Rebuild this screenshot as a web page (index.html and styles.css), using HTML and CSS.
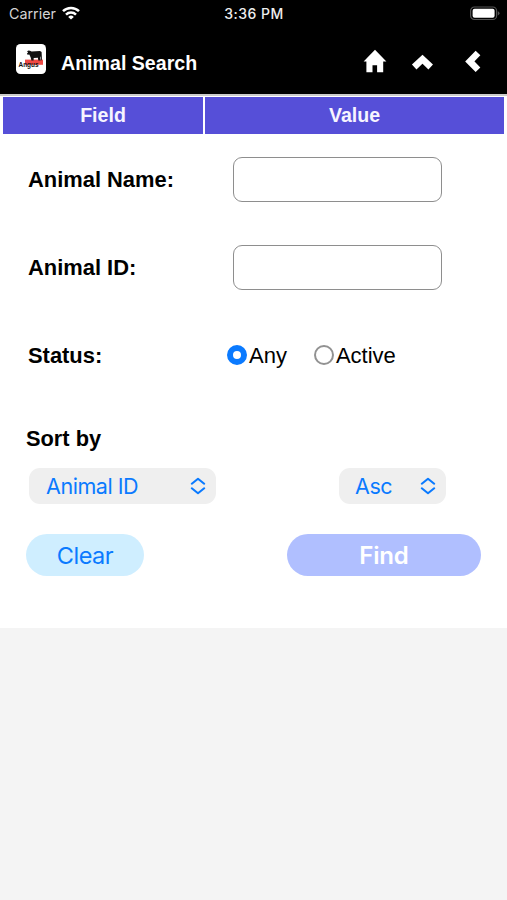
FILE: index.html
```html
<!DOCTYPE html>
<html lang="en">
<head>
<meta charset="utf-8">
<title>Animal Search</title>
<link rel="stylesheet" href="styles.css">
</head>
<body>
<header class="top">
  <div class="statusbar">
    <div class="carrier"><span>Carrier</span>
      <svg class="wifi" width="18" height="14" viewBox="0 0 18 14" fill="none" stroke="#fff" stroke-width="2.5"><path d="M1 5.2a11.4 11.4 0 0 1 16 0M4 8.6a7.1 7.1 0 0 1 10 0"/><path d="M9 13.6 6.2 10.9a4 4 0 0 1 5.6 0z" fill="#fff" stroke="none"/></svg>
    </div>
    <div class="time">3:36 PM</div>
    <svg class="battery" width="31" height="15" viewBox="0 0 31 15"><rect x="1.6" y="1" width="26" height="12.5" rx="3.8" fill="none" stroke="#555" stroke-width="1.2"/><rect x="3.6" y="2.8" width="22" height="9" rx="2" fill="#fff"/><path d="M28.8 5.2q1.7.6 1.7 2.1t-1.7 2.1z" fill="#555"/></svg>
  </div>
  <div class="navbar">
    <svg class="logo" width="30" height="30" viewBox="0 0 30 30"><rect width="30" height="30" rx="4.5" fill="#fff"/><rect x="9" y="15.6" width="18" height="5.2" fill="#ef4a45"/><path d="M11 7.2 12.6 6.4 14 6.7 15.6 7.6l8.4-.6 1.6 1 .4 8.2h-.8l-.4-4-.4 1 .2 3.2h-2.300l-.4-2.600-4.2.3-.1 2.300h-2.200l-.8-3.200-1.300-2.600-1.600.2-.8-1 1.200-1.600z" fill="#111"/><text x="2.5" y="22.600" class="logo-text" textLength="20" lengthAdjust="spacingAndGlyphs">Angus</text></svg>
    <h1>Animal Search</h1>
    <nav>
      <svg width="24" height="24" viewBox="0 0 24 24"><path d="M12 .7.6 12.400h2.800v10.800h6.100v-7h4.600v7h6.100V12.400h3.200z" fill="#fff"/></svg>
      <svg width="22" height="16" viewBox="0 0 22 16" fill="none" stroke="#fff" stroke-width="6.6"><path d="M3.200 13 11.500 5.200l8.200 7.800"/></svg>
      <svg width="16" height="22" viewBox="0 0 16 22" fill="none" stroke="#fff" stroke-width="6.6"><path d="M13 3 4.800 11.400 13 19.700"/></svg>
    </nav>
  </div>
</header>
<main>
  <div class="columns"><div>Field</div><div>Value</div></div>
  <form>
    <div class="row"><label for="name">Animal Name:</label><input class="box" id="name" type="text"></div>
    <div class="row"><label for="aid">Animal ID:</label><input class="box" id="aid" type="text"></div>
    <div class="row"><span class="label">Status:</span>
      <div class="radios">
        <label><input type="radio" name="status" checked><span>Any</span></label>
        <label><input type="radio" name="status"><span>Active</span></label>
      </div>
    </div>
    <h2>Sort by</h2>
    <div class="sorts">
      <button type="button" class="select field"><span>Animal ID</span><svg width="16" height="18" viewBox="0 0 16 18" fill="none" stroke="#0a7aff" stroke-width="2.1" stroke-linecap="round" stroke-linejoin="round"><path d="M1.8 6.7 8 1.8l6.2 4.9M1.8 11.3 8 16.2l6.2-4.9"/></svg></button>
      <button type="button" class="select order"><span>Asc</span><svg width="16" height="18" viewBox="0 0 16 18" fill="none" stroke="#0a7aff" stroke-width="2.1" stroke-linecap="round" stroke-linejoin="round"><path d="M1.8 6.7 8 1.8l6.2 4.9M1.8 11.3 8 16.2l6.2-4.9"/></svg></button>
    </div>
    <div class="actions">
      <button type="reset" class="clear">Clear</button>
      <button type="button" class="find">Find</button>
    </div>
  </form>
</main>
</body>
</html>
```
FILE: styles.css
```css
* { box-sizing: border-box; }
body { margin: 0; min-height: 900px; background: #f4f4f4; color: #000; font-family: "Liberation Sans", Arial, sans-serif; }
button { border: 0; margin: 0; font-family: Inter, sans-serif; }
.top { height: 94px; background: #000; color: #fff; }
.statusbar { height: 28px; padding: 0 7px 0 9px; display: grid; grid-template-columns: 1fr auto 1fr; align-items: center; font-family: Inter, sans-serif; }
.carrier { display: flex; align-items: center; gap: 6px; color: #d4d4d4; font-size: 14.3px; margin-top: -2px; }
.wifi { display: block; margin-top: -1px; }
.time { font-weight: 500; font-size: 14px; letter-spacing: .5px; color: #eee; margin: -2px 0 0 -1px; }
.battery { justify-self: end; margin-top: -1px; }
.navbar { height: 66px; padding: 0 26px 0 16px; display: flex; align-items: center; }
.logo { margin-top: -4px; }
.logo-text { font: bold 7.5px "Liberation Sans", sans-serif; fill: #111; }
h1 { margin: 4px 0 0 15px; font-size: 19.6px; line-height: 24px; }
nav { margin-left: auto; display: flex; align-items: center; }
nav svg:first-child { margin: -1px 0 0 -1px; }
nav svg:nth-child(2) { margin: 2px 0 0 24px; }
nav svg:nth-child(3) { margin: 0 0 0 32px; }
main { height: 534px; background: #fff; border-top: 2px solid #ccc; }
.columns { display: grid; grid-template-columns: 200px 299px; gap: 2px; padding: 1px 3px 0; }
.columns div { height: 37px; background: #564fd8; color: #f6f4ff; font-weight: bold; font-size: 19.6px; line-height: 37px; text-align: center; }
.row { height: 88px; padding-left: 28px; display: grid; grid-template-columns: 205px 1fr; align-items: center; font-size: 22px; }
.row:first-child { margin-top: 1px; }
.row > label, .label { font-weight: bold; padding-top: 1px; font-size: 21.9px; }
.box { width: 209px; height: 45px; border: 1px solid #8e8e8e; border-radius: 9px; background: #fff; padding: 0 10px; }
.radios { display: flex; gap: 27px; margin-left: -6px; }
.radios label { display: flex; align-items: center; gap: 2px; }
.radios span { padding-top: 1px; }
.radios input { appearance: none; width: 20px; height: 20px; margin: 0; border: 2px solid #929292; border-radius: 50%; background: #fff; }
.radios input:checked { border: 6px solid #0a7aff; }
h2 { margin: 27px 0 0 26px; font-size: 21.8px; line-height: 26px; }
.sorts { margin: 16px 61px 0 29px; display: flex; justify-content: space-between; }
.select { height: 36px; padding: 0 10px 0 17px; border-radius: 11px; background: #efefef; color: #0a7aff; font-size: 21.5px; letter-spacing: -.45px; display: flex; align-items: center; justify-content: space-between; }
.field { width: 187px; }
.order { width: 107px; }
.order span { margin-left: -1px; }
.actions { margin: 30px 26px 0; display: flex; justify-content: space-between; }
.actions button { height: 42px; padding: 0; border-radius: 21px; font-size: 23.5px; letter-spacing: -.5px; }
.clear { width: 118px; background: #cfeeff; color: #0a7aff; }
.actions .find { width: 194px; background: #b0bfff; color: #fff; font-weight: 600; font-size: 24px; letter-spacing: -.2px; }
```
